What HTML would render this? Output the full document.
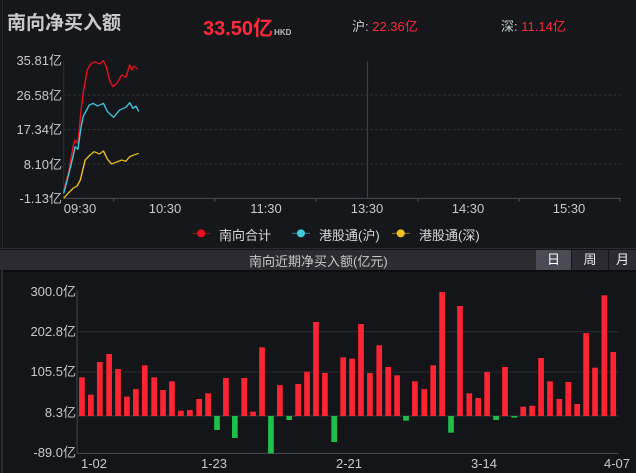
<!DOCTYPE html>
<html><head><meta charset="utf-8"><style>
body{margin:0;width:636px;height:473px;background:#131519;overflow:hidden;font-family:"Liberation Sans","Noto Sans CJK SC",sans-serif;position:relative}
.a{position:absolute;white-space:nowrap}
.yl{position:absolute;font-size:13px;color:#c8c8c8;text-align:right;line-height:15px}
.xl{position:absolute;font-size:13px;color:#c8c8c8;width:60px;text-align:center;line-height:15px}
</style></head><body>
<div class="a" style="left:0;top:0;width:636px;height:248px;background:#15171b"></div>
<div class="a" style="left:2px;top:0;width:1px;height:248px;background:#2a2c31"></div>
<div class="a" style="left:7px;top:8px;font-size:19px;font-weight:bold;color:#c9c9c9">南向净买入额</div>
<div class="a" style="left:203px;top:12px;font-size:20px;font-weight:bold;color:#ff2a3a">33.50亿<span style="font-size:8px;color:#bbb;font-weight:bold;margin-left:1px">HKD</span></div>
<div class="a" style="left:352px;top:16px;font-size:13px;color:#ccc">沪: <span style="color:#ff2a3a">22.36亿</span></div>
<div class="a" style="left:501px;top:16px;font-size:13px;color:#ccc">深: <span style="color:#ff2a3a">11.14亿</span></div>
<svg class="a" style="left:0;top:0" width="636" height="250" viewBox="0 0 1568 750" preserveAspectRatio="none">
<g stroke="#33363c" stroke-width="3" stroke-dasharray="6 6">
<line x1="157" y1="285" x2="1530" y2="285"/><line x1="157" y1="389" x2="1530" y2="389"/><line x1="157" y1="492" x2="1530" y2="492"/></g>
<line x1="906" y1="185" x2="906" y2="595" stroke="#3a3d43" stroke-width="3"/>
<line x1="157" y1="595" x2="1530" y2="595" stroke="#4a4d53" stroke-width="3"/>
<line x1="157" y1="185" x2="157" y2="595" stroke="#2a2c31" stroke-width="3"/>
<g stroke="#4a4d53" stroke-width="3"><line x1="280" y1="595" x2="280" y2="604"/><line x1="530" y1="595" x2="530" y2="604"/><line x1="780" y1="595" x2="780" y2="604"/><line x1="1030" y1="595" x2="1030" y2="604"/><line x1="1280" y1="595" x2="1280" y2="604"/><line x1="1528" y1="595" x2="1528" y2="604"/></g>
<g fill="none" stroke-width="3.5" stroke-linejoin="round">
<polyline stroke="#e8101c" points="157,575 170,510 180,440 185,420 192,430 200,330 205,280 215,210 225,190 235,185 245,192 255,182 262,200 270,240 278,260 288,250 300,225 310,232 320,195 325,210 330,198 340,208"/>
<polyline stroke="#3ec8dc" points="157,580 170,520 180,470 185,440 192,448 200,380 205,350 220,315 230,310 240,318 255,310 265,335 280,352 295,330 310,322 320,308 328,325 335,318 342,334"/>
<polyline stroke="#f4c020" points="157,595 168,580 180,565 190,558 198,540 210,480 222,465 232,455 245,462 255,453 265,478 275,492 290,485 300,480 310,484 320,470 330,465 342,460"/>
</g>
<line x1="474" y1="700" x2="518" y2="700" stroke="#8a1a1a" stroke-width="3"/><ellipse cx="496" cy="700" rx="10" ry="12" fill="#e8101c"/>
<line x1="720" y1="700" x2="764" y2="700" stroke="#2a7a86" stroke-width="3"/><ellipse cx="742" cy="700" rx="10" ry="12" fill="#3ec8dc"/>
<line x1="966" y1="700" x2="1010" y2="700" stroke="#8a7020" stroke-width="3"/><ellipse cx="988" cy="700" rx="10" ry="12" fill="#f4c020"/>
</svg>
<div class="yl" style="right:574px;top:53px">35.81亿</div>
<div class="yl" style="right:574px;top:88px">26.58亿</div>
<div class="yl" style="right:574px;top:122px">17.34亿</div>
<div class="yl" style="right:574px;top:157px">8.10亿</div>
<div class="yl" style="right:574px;top:191px">-1.13亿</div>
<div class="xl" style="left:50px;top:201px">09:30</div>
<div class="xl" style="left:135px;top:201px">10:30</div>
<div class="xl" style="left:236px;top:201px">11:30</div>
<div class="xl" style="left:337px;top:201px">13:30</div>
<div class="xl" style="left:438px;top:201px">14:30</div>
<div class="xl" style="left:539px;top:201px">15:30</div>
<div class="a" style="left:219px;top:225px;font-size:13px;color:#d8d8d8">南向合计</div>
<div class="a" style="left:319px;top:225px;font-size:13px;color:#d8d8d8">港股通(沪)</div>
<div class="a" style="left:419px;top:225px;font-size:13px;color:#d8d8d8">港股通(深)</div>
<div class="a" style="left:0;top:248px;width:636px;height:1px;background:#2a2c31"></div>
<div class="a" style="left:0;top:250px;width:636px;height:20px;background:#2b2b31"></div>
<div class="a" style="left:0;top:270px;width:636px;height:2px;background:#0c0d10"></div>
<div class="a" style="left:1px;top:250px;width:2px;height:223px;background:#2a2c31"></div>
<div class="a" style="left:249px;top:251px;font-size:13px;color:#c8c8c8">南向近期净买入额(亿元)</div>
<div class="a" style="left:536px;top:250px;width:35px;height:20px;background:#4a4b55;color:#fff;font-size:13px;text-align:center;line-height:20px">日</div>
<div class="a" style="left:571px;top:250px;width:1px;height:20px;background:#15161a"></div>
<div class="a" style="left:572px;top:250px;width:36px;height:20px;color:#eee;font-size:13px;text-align:center;line-height:20px">周</div>
<div class="a" style="left:608px;top:250px;width:1px;height:20px;background:#15161a"></div>
<div class="a" style="left:609px;top:250px;width:27px;height:20px;color:#eee;font-size:13px;text-align:center;line-height:20px">月</div>
<svg class="a" style="left:0;top:240px" width="636" height="233" viewBox="0 0 1568 699" preserveAspectRatio="none">
<g stroke="#2a2c31" stroke-width="3"><line x1="190" y1="275" x2="1525" y2="275"/><line x1="190" y1="396" x2="1525" y2="396"/></g>
<line x1="190" y1="528" x2="1525" y2="528" stroke="#3a3d43" stroke-width="3"/>
<line x1="190" y1="640" x2="1525" y2="640" stroke="#4a4d53" stroke-width="3"/>
<line x1="190" y1="150" x2="190" y2="640" stroke="#3a3d43" stroke-width="3"/>
<g fill="#ff2433">
<rect x="195" y="412" width="14" height="116"/><rect x="217" y="464" width="14" height="64"/><rect x="239" y="366" width="14" height="162"/><rect x="262" y="342" width="14" height="186"/><rect x="284" y="387" width="14" height="141"/><rect x="306" y="470" width="14" height="58"/><rect x="328" y="447" width="14" height="81"/><rect x="350" y="376" width="14" height="152"/><rect x="373" y="412" width="14" height="116"/><rect x="395" y="450" width="14" height="78"/><rect x="417" y="424" width="14" height="104"/><rect x="439" y="512" width="14" height="16"/><rect x="461" y="510" width="14" height="18"/><rect x="484" y="477" width="14" height="51"/><rect x="506" y="460" width="14" height="68"/>
<rect x="550" y="414" width="14" height="114"/><rect x="595" y="414" width="14" height="114"/><rect x="617" y="515" width="14" height="13"/><rect x="639" y="322" width="14" height="206"/><rect x="683" y="435" width="14" height="93"/><rect x="728" y="432" width="14" height="96"/><rect x="750" y="395" width="14" height="133"/><rect x="772" y="246" width="14" height="282"/><rect x="794" y="399" width="14" height="129"/>
<rect x="839" y="352" width="14" height="176"/><rect x="861" y="356" width="14" height="172"/><rect x="883" y="252" width="14" height="276"/><rect x="905" y="399" width="14" height="129"/><rect x="928" y="316" width="14" height="212"/><rect x="950" y="381" width="14" height="147"/><rect x="972" y="406" width="14" height="122"/>
<rect x="1016" y="424" width="14" height="104"/><rect x="1039" y="447" width="14" height="81"/><rect x="1061" y="376" width="14" height="152"/><rect x="1083" y="156" width="14" height="372"/><rect x="1127" y="198" width="14" height="330"/><rect x="1150" y="460" width="14" height="68"/><rect x="1172" y="474" width="14" height="54"/><rect x="1194" y="396" width="14" height="132"/><rect x="1238" y="381" width="14" height="147"/>
<rect x="1283" y="500" width="14" height="28"/><rect x="1305" y="497" width="14" height="31"/><rect x="1327" y="354" width="14" height="174"/><rect x="1349" y="424" width="14" height="104"/><rect x="1372" y="477" width="14" height="51"/><rect x="1394" y="426" width="14" height="102"/><rect x="1416" y="492" width="14" height="36"/><rect x="1438" y="279" width="14" height="249"/><rect x="1460" y="383" width="14" height="145"/><rect x="1483" y="166" width="14" height="362"/><rect x="1505" y="336" width="14" height="192"/>
</g>
<g fill="#1ec04a">
<rect x="528" y="528" width="14" height="42"/><rect x="572" y="528" width="14" height="66"/><rect x="661" y="528" width="14" height="112"/><rect x="706" y="528" width="14" height="12"/><rect x="817" y="528" width="14" height="78"/><rect x="994" y="528" width="14" height="14"/><rect x="1105" y="528" width="14" height="50"/><rect x="1216" y="528" width="14" height="12"/><rect x="1261" y="528" width="14" height="5"/>
</g>
</svg>
<div class="yl" style="right:560px;top:284px">300.0亿</div>
<div class="yl" style="right:560px;top:324px">202.8亿</div>
<div class="yl" style="right:560px;top:364px">105.5亿</div>
<div class="yl" style="right:560px;top:405px">8.3亿</div>
<div class="yl" style="right:560px;top:445px">-89.0亿</div>
<div class="xl" style="left:64px;top:456px">1-02</div>
<div class="xl" style="left:184px;top:456px">1-23</div>
<div class="xl" style="left:319px;top:456px">2-21</div>
<div class="xl" style="left:454px;top:456px">3-14</div>
<div class="xl" style="left:587px;top:456px">4-07</div>
</body></html>
